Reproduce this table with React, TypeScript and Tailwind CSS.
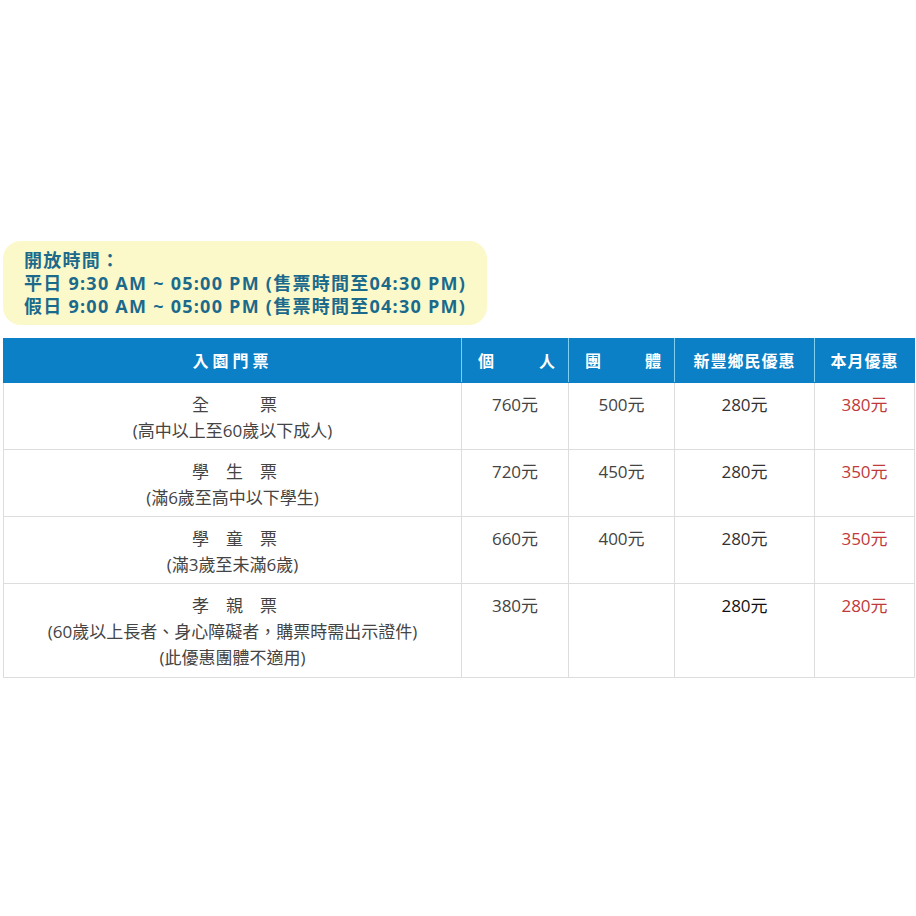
const rows = [
  {
    name: ["全", "", "票"],
    notes: ["(高中以上至60歲以下成人)"],
    single: "760元",
    group: "500元",
    local: "280元",
    month: "380元",
  },
  {
    name: ["學", "生", "票"],
    notes: ["(滿6歲至高中以下學生)"],
    single: "720元",
    group: "450元",
    local: "280元",
    month: "350元",
  },
  {
    name: ["學", "童", "票"],
    notes: ["(滿3歲至未滿6歲)"],
    single: "660元",
    group: "400元",
    local: "280元",
    month: "350元",
  },
  {
    name: ["孝", "親", "票"],
    notes: ["(60歲以上長者、身心障礙者，購票時需出示證件)", "(此優惠團體不適用)"],
    single: "380元",
    group: "",
    local: "280元",
    month: "280元",
  },
];

const App = () => {
  return (
    <div
      className="w-[916px] h-[916px] bg-white pt-[241px] pl-[3px]"
      style={{ fontFamily: '"Open Sans", "Noto Sans CJK TC", sans-serif' }}
    >
      <div className="w-[484px] h-[84px] rounded-[18px] bg-[#fbf9c9] pl-[21px] pt-[8px] text-[18px] leading-[23px] font-bold tracking-[1.25px] text-[#1b6a8c]">
        <p>開放時間：</p>
        <p>平日 9:30 AM ~ 05:00 PM (售票時間至04:30 PM)</p>
        <p>假日 9:00 AM ~ 05:00 PM (售票時間至04:30 PM)</p>
      </div>

      <table className="mt-[13px] border-collapse table-fixed w-[911px] text-[17px] text-[#444]">
        <colgroup>
          <col className="w-[458px]" />
          <col className="w-[107px]" />
          <col className="w-[106px]" />
          <col className="w-[140px]" />
          <col className="w-[100px]" />
        </colgroup>
        <thead>
          <tr className="h-[44px] bg-[#0b80c6] text-white font-bold text-[16px]">
            <th className="border border-[#0b80c6] border-r-[#7fd0f0]">
              <span className="tracking-[4px]">入園門票</span>
            </th>
            <th className="border border-[#0b80c6] border-r-[#7fd0f0] pl-[16px] pr-[13px]">
              <div className="flex justify-between">
                <span>個</span>
                <span>人</span>
              </div>
            </th>
            <th className="border border-[#0b80c6] border-r-[#7fd0f0] pl-[16px] pr-[13px]">
              <div className="flex justify-between">
                <span>團</span>
                <span>體</span>
              </div>
            </th>
            <th className="border border-[#0b80c6] border-r-[#7fd0f0] tracking-[1px]">新豐鄉民優惠</th>
            <th className="border border-[#0b80c6] tracking-[1px]">本月優惠</th>
          </tr>
        </thead>
        <tbody>
          {rows.map((r, i) => (
            <tr key={i} className="align-top">
              <td className={`border border-[#dddddd] pt-[9px] text-center leading-[26px] ${i === 3 ? "pb-[6px]" : "pb-[5px]"}`}>
                <div className="grid grid-cols-[17px_17px_17px] gap-x-[17px] justify-center pl-[4px]">
                  {r.name.map((c, j) => (
                    <span key={j}>{c}</span>
                  ))}
                </div>
                {r.notes.map((n, j) => (
                  <div key={j}>{n}</div>
                ))}
              </td>
              <td className="border border-[#dddddd] pt-[9px] text-center leading-[26px]">{r.single}</td>
              <td className="border border-[#dddddd] pt-[9px] text-center leading-[26px]">{r.group}</td>
              <td className={`border border-[#dddddd] pt-[9px] text-center leading-[26px] ${i === 3 ? "text-[#111]" : "text-[#333]"}`}>
                {r.local}
              </td>
              <td className="border border-[#dddddd] pt-[9px] text-center leading-[26px] text-[#c0393b]">{r.month}</td>
            </tr>
          ))}
        </tbody>
      </table>
    </div>
  );
};

export default App;
